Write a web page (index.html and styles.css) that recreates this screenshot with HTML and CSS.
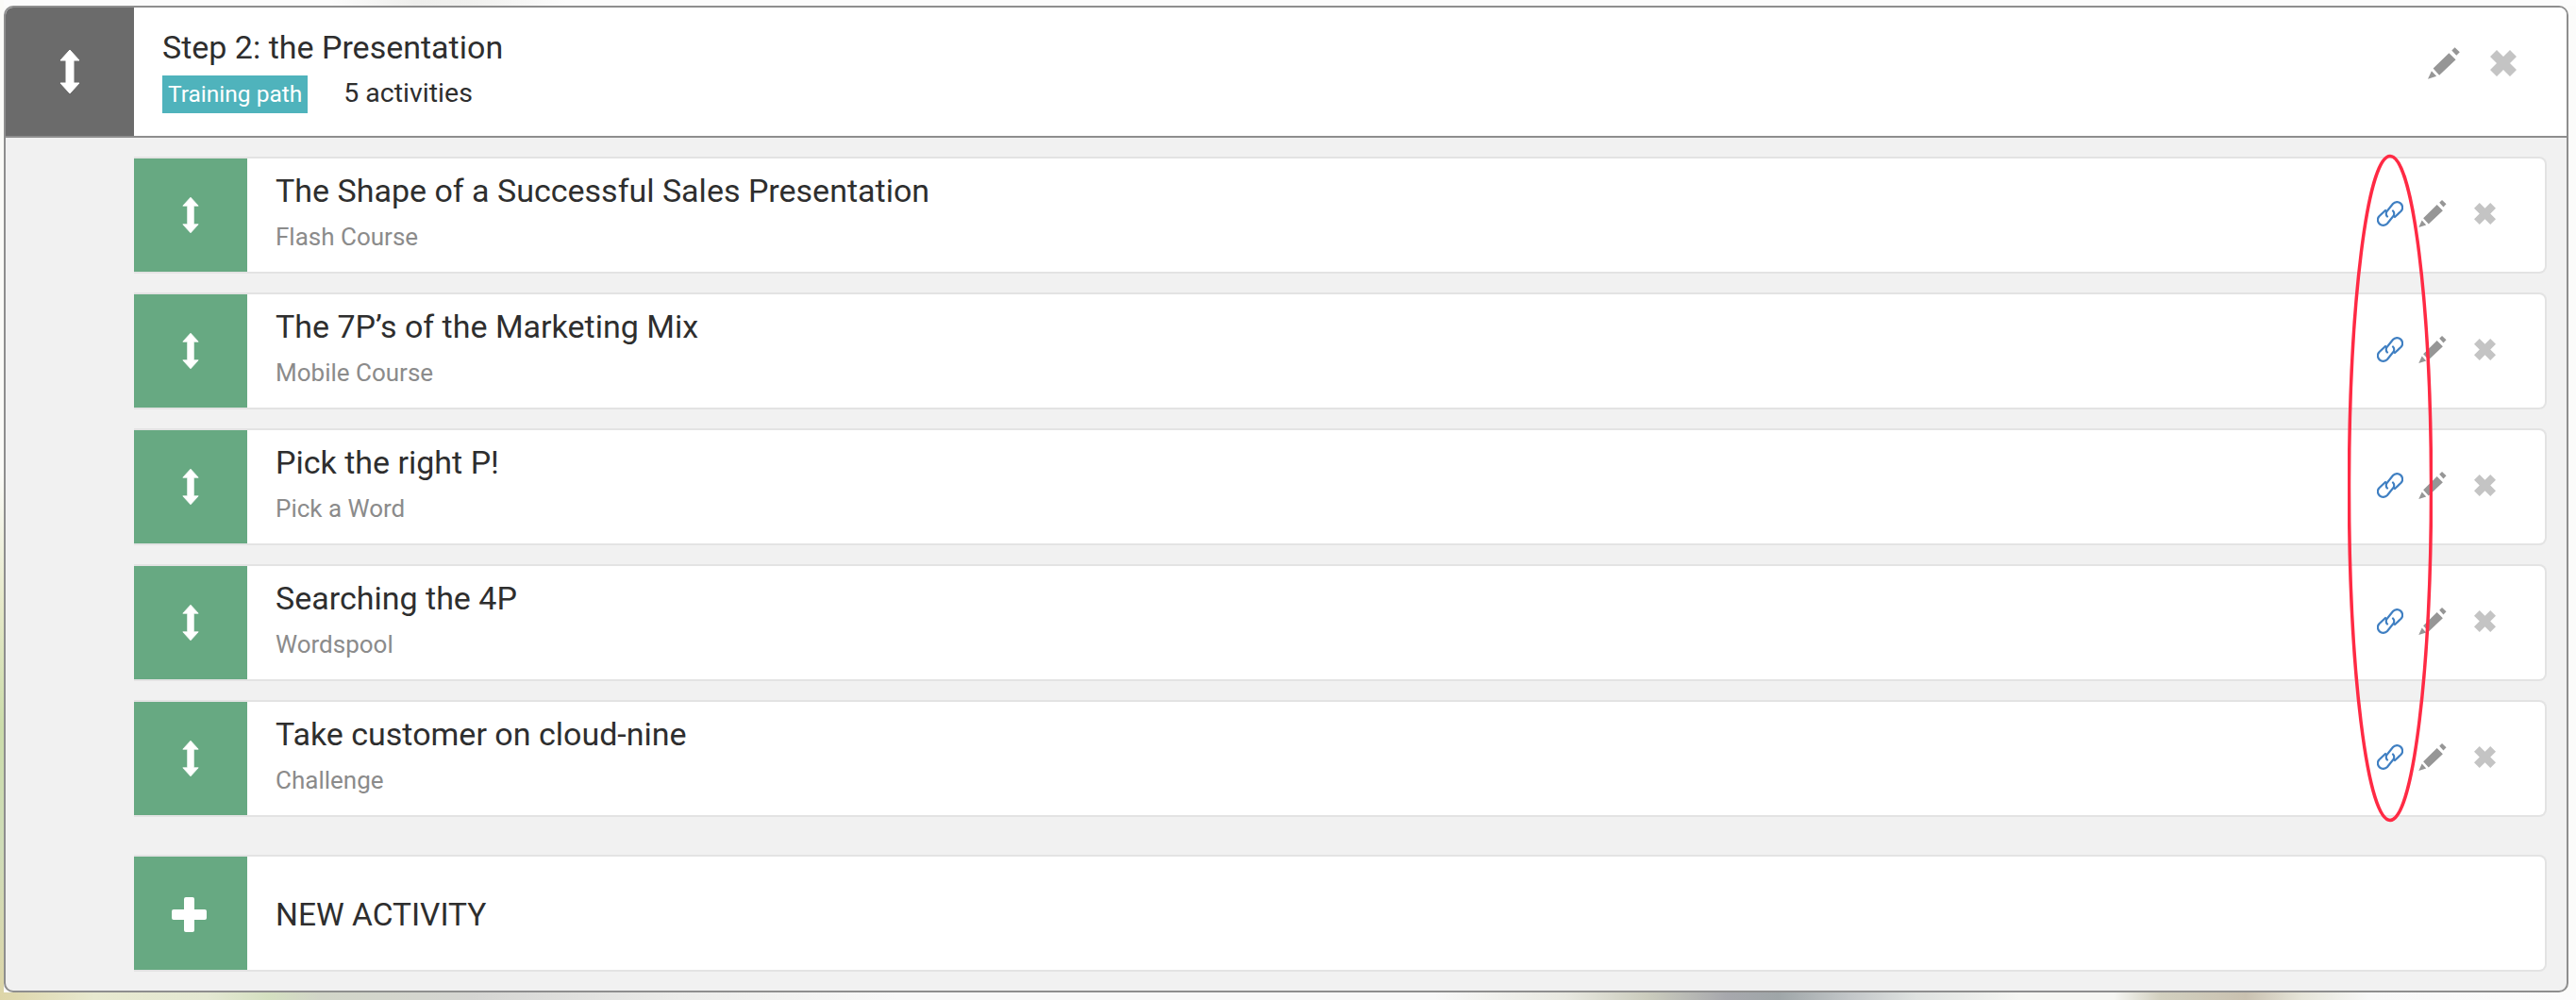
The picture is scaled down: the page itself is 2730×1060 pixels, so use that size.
FILE: index.html
```html
<!DOCTYPE html>
<html lang="en">
<head>
<meta charset="utf-8">
<title>Step 2: the Presentation</title>
<link rel="stylesheet" href="styles.css">
</head>
<body>
<svg class="sprites" width="0" height="0" aria-hidden="true">
  <symbol id="i-move" viewBox="0 0 22 48"><path d="M11 1 L21 12 H15 V36 H21 L11 47 L1 36 H7 V12 H1 Z" fill="#fff" stroke="#fff" stroke-width="1" stroke-linejoin="round"/></symbol>
  <symbol id="i-pencil" viewBox="0 0 34.5 34"><path d="M0 34 L4 25.3 L9.3 31 Z M5.7 22.7 L22.7 6 L30 13.3 L12.3 30 Z M25.7 3.3 L29 0 L34.3 5 L30.7 8.7 Z"/></symbol>
  <symbol id="i-x" viewBox="1 1 26 26"><path d="M14 7.5 L20.5 1 L27 7.5 L20.5 14 L27 20.5 L20.5 27 L14 20.5 L7.5 27 L1 20.5 L7.5 14 L1 7.5 L7.5 1 Z"/></symbol>
  <symbol id="i-link" viewBox="0 0 28 29"><path d="M11 17.5 A4.2 4.2 0 0 1 11 11.5 L17 4 A5.6 5.6 0 0 1 25.6 11.8 L19 18 M17 11.5 A4.2 4.2 0 0 1 17 17.5 L11 25 A5.6 5.6 0 0 1 2.4 17.2 L9 11" fill="none" stroke="#3f7fc2" stroke-width="2.2" stroke-linecap="round"/></symbol>
</svg>

<main class="page">
  <section class="panel">
    <header class="step">
      <div class="step-handle"><svg class="ico-move-lg"><use href="#i-move"/></svg></div>
      <div class="step-text">
        <h1 class="step-title">Step 2: the Presentation</h1>
        <div class="step-meta">
          <span class="badge">Training path</span>
          <span class="count">5 activities</span>
        </div>
      </div>
      <div class="step-actions">
        <svg class="ico-pencil-lg"><use href="#i-pencil"/></svg>
        <svg class="ico-x-lg"><use href="#i-x"/></svg>
      </div>
    </header>

    <div class="activities">
      <article class="card">
        <div class="card-handle"><svg class="ico-move"><use href="#i-move"/></svg></div>
        <div class="card-text"><h2 class="card-title">The Shape of a Successful Sales Presentation</h2><p class="card-sub">Flash Course</p></div>
        <div class="card-actions"><svg class="ico-link"><use href="#i-link"/></svg><svg class="ico-pencil"><use href="#i-pencil"/></svg><svg class="ico-x"><use href="#i-x"/></svg></div>
      </article>
      <article class="card">
        <div class="card-handle"><svg class="ico-move"><use href="#i-move"/></svg></div>
        <div class="card-text"><h2 class="card-title">The 7P’s of the Marketing Mix</h2><p class="card-sub">Mobile Course</p></div>
        <div class="card-actions"><svg class="ico-link"><use href="#i-link"/></svg><svg class="ico-pencil"><use href="#i-pencil"/></svg><svg class="ico-x"><use href="#i-x"/></svg></div>
      </article>
      <article class="card">
        <div class="card-handle"><svg class="ico-move"><use href="#i-move"/></svg></div>
        <div class="card-text"><h2 class="card-title">Pick the right P!</h2><p class="card-sub">Pick a Word</p></div>
        <div class="card-actions"><svg class="ico-link"><use href="#i-link"/></svg><svg class="ico-pencil"><use href="#i-pencil"/></svg><svg class="ico-x"><use href="#i-x"/></svg></div>
      </article>
      <article class="card">
        <div class="card-handle"><svg class="ico-move"><use href="#i-move"/></svg></div>
        <div class="card-text"><h2 class="card-title">Searching the 4P</h2><p class="card-sub">Wordspool</p></div>
        <div class="card-actions"><svg class="ico-link"><use href="#i-link"/></svg><svg class="ico-pencil"><use href="#i-pencil"/></svg><svg class="ico-x"><use href="#i-x"/></svg></div>
      </article>
      <article class="card">
        <div class="card-handle"><svg class="ico-move"><use href="#i-move"/></svg></div>
        <div class="card-text"><h2 class="card-title">Take customer on cloud-nine</h2><p class="card-sub">Challenge</p></div>
        <div class="card-actions"><svg class="ico-link"><use href="#i-link"/></svg><svg class="ico-pencil"><use href="#i-pencil"/></svg><svg class="ico-x"><use href="#i-x"/></svg></div>
      </article>

      <article class="card card-new">
        <div class="card-handle">
          <svg class="ico-plus" viewBox="0 0 37 37"><path d="M13 2 a2 2 0 0 1 2 -2 h7 a2 2 0 0 1 2 2 V13 H35 a2 2 0 0 1 2 2 v7 a2 2 0 0 1 -2 2 H24 V35 a2 2 0 0 1 -2 2 h-7 a2 2 0 0 1 -2 -2 V24 H2 a2 2 0 0 1 -2 -2 v-7 a2 2 0 0 1 2 -2 H13 Z" fill="#fff"/></svg>
        </div>
        <div class="new-label">NEW ACTIVITY</div>
      </article>
    </div>
  </section>

  <svg class="highlight" viewBox="0 0 90 709" aria-hidden="true"><ellipse cx="45" cy="354.5" rx="43.5" ry="352" fill="none" stroke="#ff2a44" stroke-width="3.5"/></svg>
</main>
</body>
</html>
```

FILE: styles.css
```css
* { box-sizing: border-box; }

html, body { margin: 0; height: 100%; }

body {
  font-family: Roboto, "Liberation Sans", sans-serif;
  color: #2e2e2e;
  background-color: #fbfbfa;
  background-repeat: no-repeat;
  background-image:
    linear-gradient(90deg, #ddd5a8 0, #e8e9cf 100px, #e4e8d2 220px, #d4e0c0 285px, #d2d5c8 340px, #d5d5d2 500px, #ececea 720px, #f8f8f8 950px, #f8f8f8 1520px, #e8e8e0 1660px, #cbccbd 1745px, #a7a8ad 1830px, #9fa6a8 1885px, #c2c6c8 1960px, #dfe2e0 2030px, #f6f6f3 2140px, #f6f6f3 2240px, #d2d0bf 2290px, #c9c1b0 2380px, #e6e5d9 2440px, #f8f8f8 2510px, #fbfbfb 2730px),
    linear-gradient(180deg, #fbfbf8 500px, #e6e9c9 640px, #cbdcaa 770px, #cfdcb8 900px, #ddd5a8 1060px),
    linear-gradient(90deg, #fcfcfc 350px, #eeeeec 440px, #f0f0ee 500px, #fcfcfc 600px);
  background-size: 100% 8px, 4px 100%, 100% 6px;
  background-position: left bottom, left top, left top;
}

.sprites { position: absolute; }

.page {
  position: relative;
  height: 100%;
  padding: 6px 8px 8px 4px;
}

.panel {
  height: 100%;
  display: flex;
  flex-direction: column;
  border: 2px solid #8e8e8e;
  border-radius: 10px;
  background: #f1f1f1;
  overflow: hidden;
}

/* step header */
.step {
  display: flex;
  height: 138px;
  flex: none;
  background: #fff;
  border-bottom: 2px solid #8e8e8e;
}

.step-handle {
  width: 136px;
  flex: none;
  display: flex;
  align-items: center;
  justify-content: center;
  background: #6b6b6b;
}

.ico-move-lg { width: 22px; height: 48px; }

.step-text { flex: 1; padding: 22px 0 0 30px; }

.step-title {
  margin: 0 0 10px;
  font-size: 34px;
  line-height: 40px;
  font-weight: 400;
}

.step-meta { display: flex; align-items: center; }

.badge {
  padding: 0 6px;
  height: 40px;
  font-size: 24.5px;
  line-height: 40px;
  color: #fff;
  background: #4fb3bc;
}

.count { margin: 0 0 3px 38px; font-size: 28.5px; }

.step-actions {
  display: flex;
  align-items: center;
  gap: 32px;
  height: 34px;
  margin: 42px 53px 0 0;
  flex: none;
}

.ico-pencil-lg { width: 34px; height: 34px; fill: #969696; }
.ico-x-lg { width: 28px; height: 28px; fill: #c4c4c4; }

/* activities */
.activities {
  flex: 1;
  display: flex;
  flex-direction: column;
  gap: 20px;
  padding: 20px 21px 20px 136px;
}

.card {
  display: flex;
  height: 124px;
  flex: none;
  background: #fff;
  border: 2px solid #e3e3e3;
  border-left: 0;
  border-radius: 0 8px 8px 0;
}

.card-new { margin-top: 20px; }

.card-handle {
  width: 120px;
  flex: none;
  display: flex;
  align-items: center;
  justify-content: center;
  background: #67a982;
}

.ico-move { width: 18px; height: 40px; }

.ico-plus { width: 37px; height: 37px; margin: 3px 3px 0 0; }

.card-text { flex: 1; padding: 14px 0 0 30px; }

.card-title {
  margin: 0 0 13px;
  font-size: 34px;
  line-height: 40px;
  font-weight: 400;
}

.card-sub {
  margin: 0;
  font-size: 26px;
  line-height: 32px;
  color: #8b8b8b;
}

.card-actions {
  display: flex;
  align-items: center;
  height: 30px;
  margin: 43px 52px 0 0;
  flex: none;
}

.ico-link { width: 28px; height: 29px; margin-right: 16px; }
.ico-pencil { width: 30px; height: 29px; margin-right: 29px; fill: #969696; }
.ico-x { width: 23px; height: 23px; fill: #c4c4c4; }

.new-label {
  padding: 2px 0 0 30px;
  align-self: center;
  font-size: 33.5px;
}

/* hand-drawn annotation lying over the rows */
.highlight {
  position: absolute;
  left: 2488px;
  top: 163px;
  width: 90px;
  height: 709px;
  pointer-events: none;
}
```
